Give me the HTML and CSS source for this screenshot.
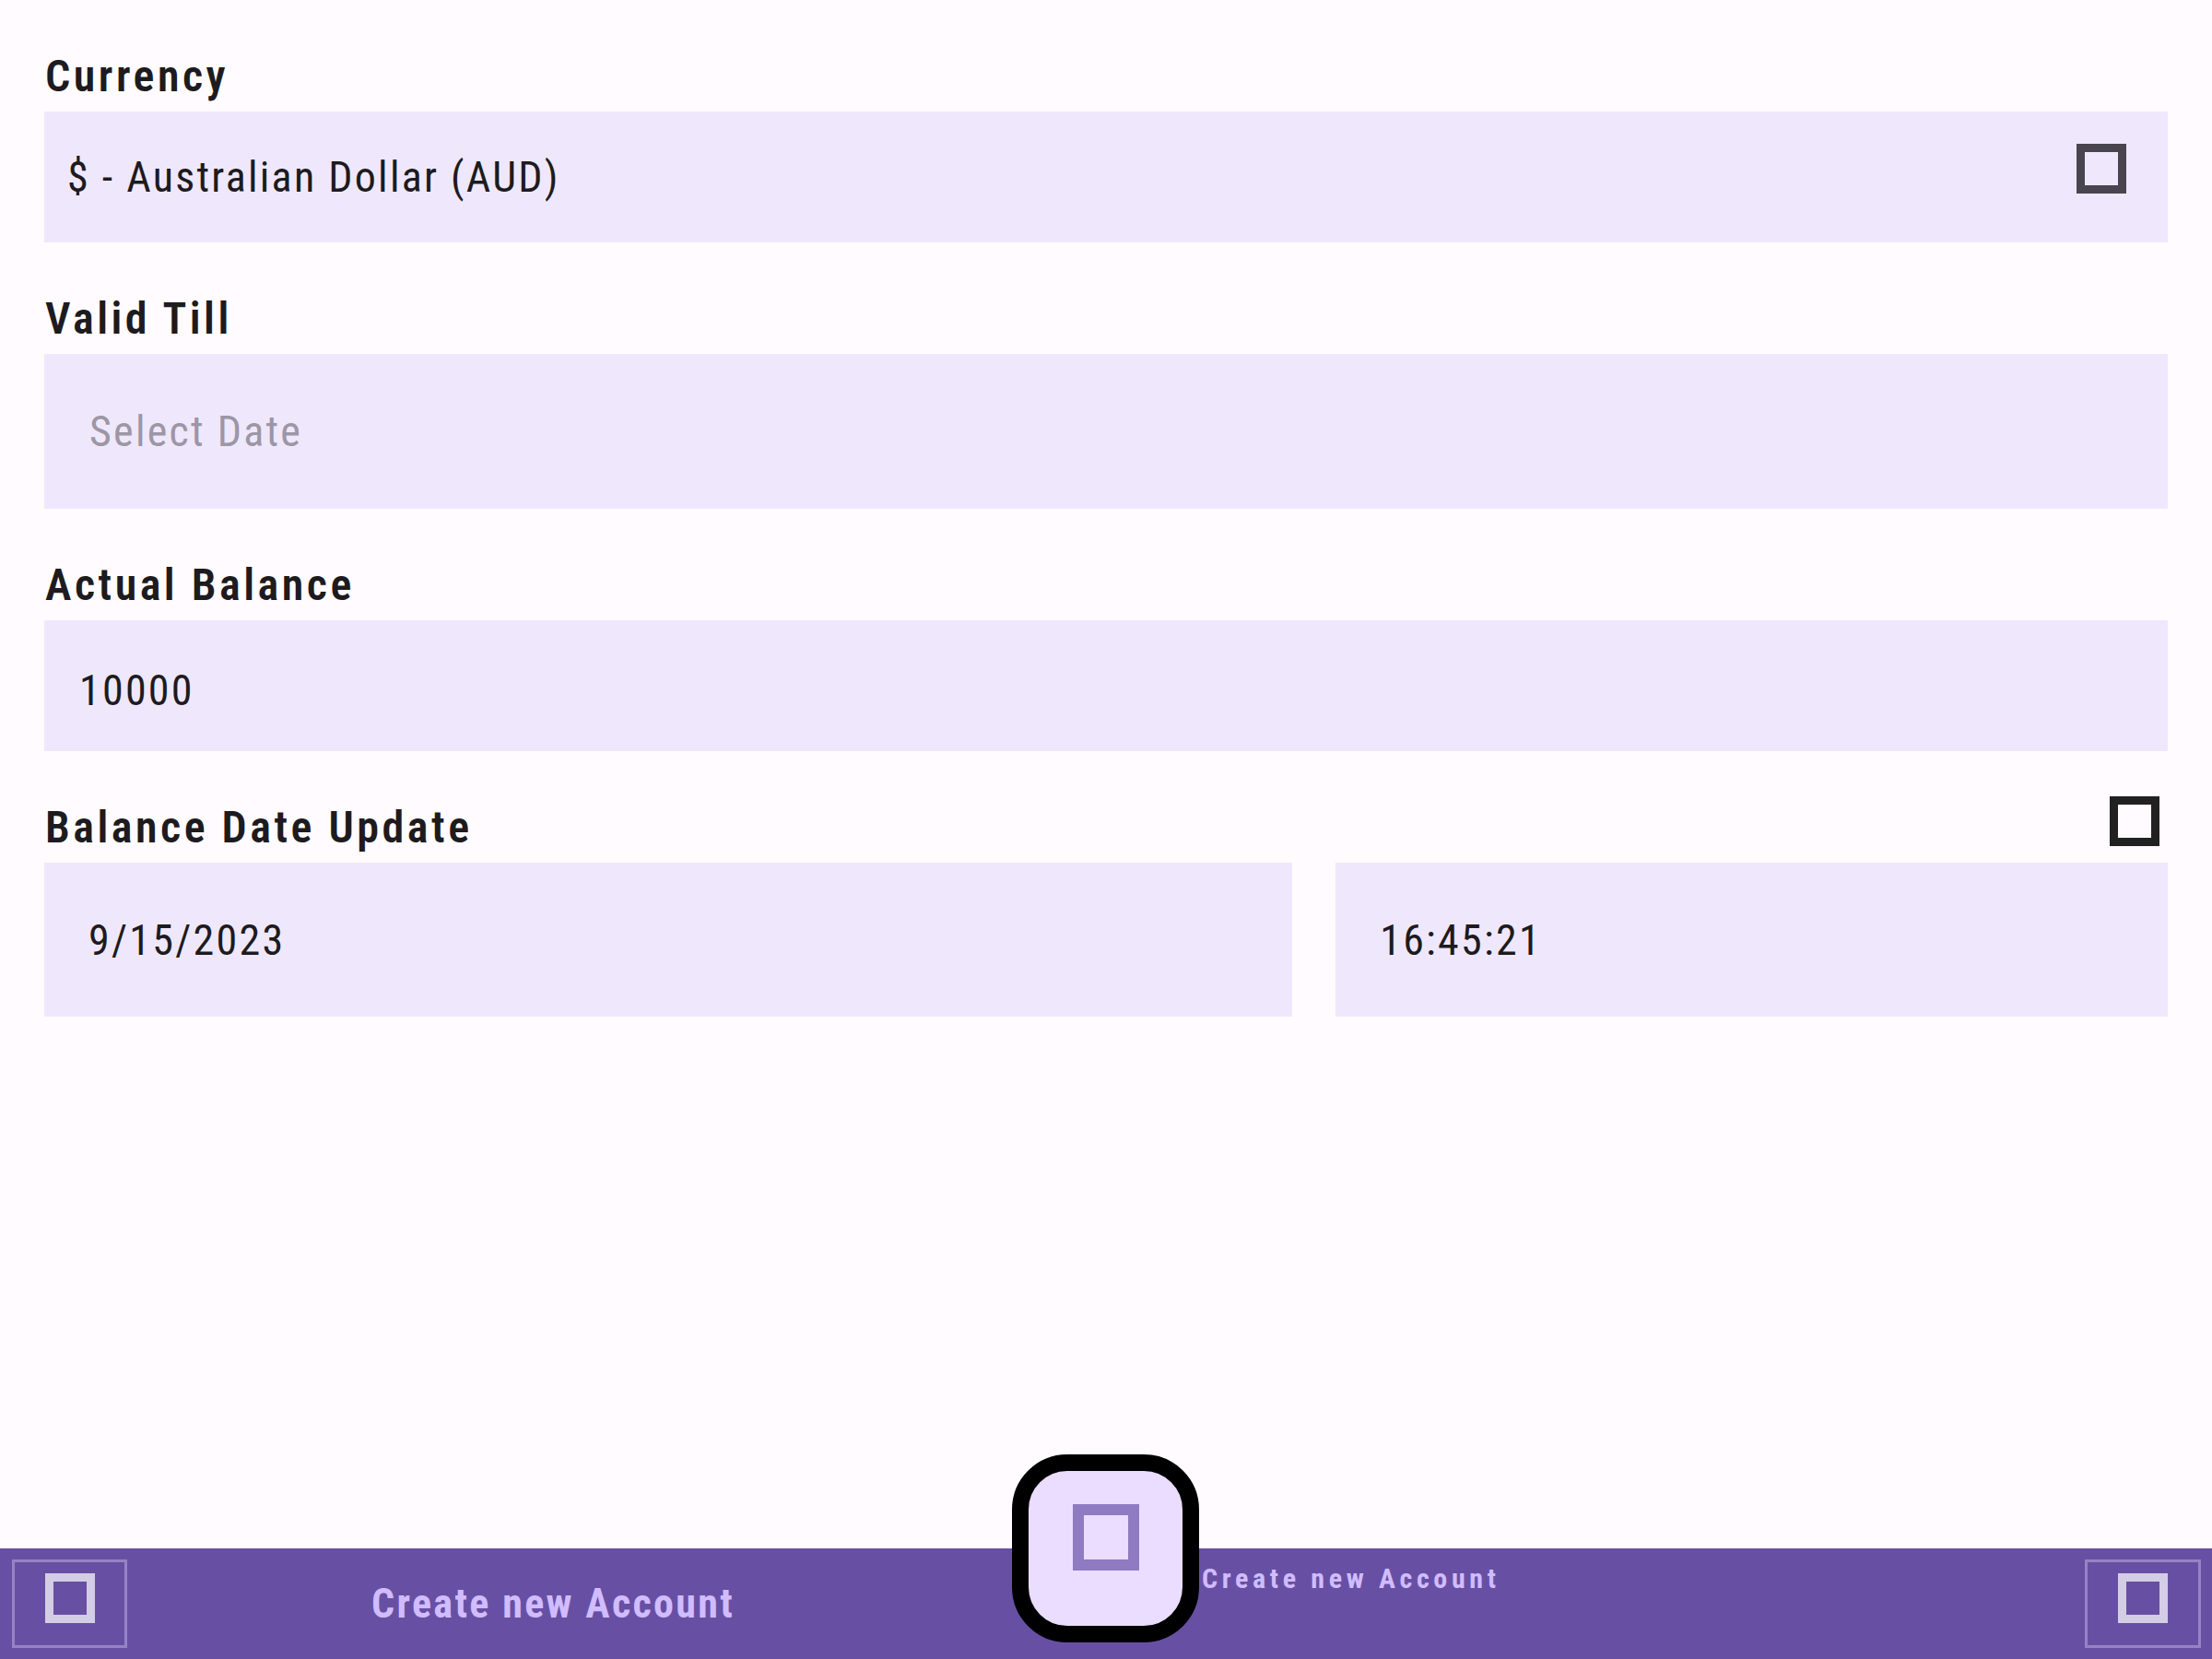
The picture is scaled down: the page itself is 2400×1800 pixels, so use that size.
FILE: index.html
```html
<!DOCTYPE html>
<html lang="en">
<head>
<meta charset="utf-8">
<title>Create new Account</title>
<link rel="stylesheet" href="styles.css">
</head>
<body>
<main class="form">
  <section class="group">
    <div class="label">Currency</div>
    <div class="field field-currency">
      <span class="value">$ - Australian Dollar (AUD)</span>
      <svg class="icon icon-currency" width="54" height="54" viewBox="0 0 54 54"><rect x="4.5" y="4.5" width="45" height="45" fill="none" stroke="currentColor" stroke-width="9"/></svg>
    </div>
  </section>
  <section class="group">
    <div class="label">Valid Till</div>
    <div class="field field-valid">
      <span class="value placeholder">Select Date</span>
    </div>
  </section>
  <section class="group">
    <div class="label">Actual Balance</div>
    <div class="field field-balance">
      <span class="value">10000</span>
    </div>
  </section>
  <section class="group">
    <div class="label-row">
      <div class="label">Balance Date Update</div>
      <svg class="icon icon-update" width="54" height="54" viewBox="0 0 54 54"><rect x="4.5" y="4.5" width="45" height="45" fill="none" stroke="currentColor" stroke-width="9"/></svg>
    </div>
    <div class="date-row">
      <div class="field field-date"><span class="value">9/15/2023</span></div>
      <div class="field field-date"><span class="value">16:45:21</span></div>
    </div>
  </section>
</main>
<nav class="bottom-bar">
  <div class="nav-btn">
    <svg class="nav-icon" width="54" height="54" viewBox="0 0 54 54"><rect x="4.5" y="4.5" width="45" height="45" fill="none" stroke="currentColor" stroke-width="9"/></svg>
  </div>
  <div class="bar-title">Create new Account</div>
  <div class="fab-wrap">
    <div class="fab">
      <svg class="fab-icon" width="72" height="72" viewBox="0 0 72 72"><rect x="6" y="6" width="60" height="60" fill="none" stroke="currentColor" stroke-width="12"/></svg>
    </div>
    <div class="fab-label">Create new Account</div>
  </div>
  <div class="nav-btn nav-btn-right">
    <svg class="nav-icon" width="54" height="54" viewBox="0 0 54 54"><rect x="4.5" y="4.5" width="45" height="45" fill="none" stroke="currentColor" stroke-width="9"/></svg>
  </div>
</nav>
</body>
</html>
```
FILE: styles.css
```css
html, body {
  margin: 0;
  padding: 0;
}
body {
  background: #fffbfe;
  font-family: Roboto, "Noto Sans", "Liberation Sans", sans-serif;
  font-stretch: 75%;
  color: #1d1b20;
  height: 1800px;
  display: flex;
  flex-direction: column;
  overflow: hidden;
}
.form {
  flex: 1;
  padding: 55px 48px 0;
  display: flex;
  flex-direction: column;
  gap: 55px;
}
.group {
  display: flex;
  flex-direction: column;
  gap: 10px;
}
.label {
  font-size: 48px;
  font-weight: 600;
  line-height: 56px;
  letter-spacing: 3.5px;
  color: #1d1b20;
  padding-left: 1px;
}
.label-row {
  display: flex;
  justify-content: space-between;
  align-items: flex-start;
}
.field {
  background: #efe8fc;
  display: flex;
  align-items: center;
  box-sizing: border-box;
}
.value {
  font-size: 46px;
  font-weight: 400;
  letter-spacing: 2.25px;
  color: #1d1b20;
}
.placeholder {
  color: #9d96a5;
}
.field-currency {
  height: 142px;
  padding-left: 25px;
}
.field-valid {
  height: 168px;
  padding-left: 49px;
}
.field-balance {
  height: 142px;
  padding-left: 38px;
  padding-top: 10px;
}
.date-row {
  display: grid;
  grid-template-columns: 3fr 2fr;
  gap: 47px;
}
.field-date {
  height: 167px;
  padding-left: 48px;
}
.icon {
  display: block;
  flex: none;
}
.icon-currency {
  color: #49454f;
  align-self: flex-start;
  margin-top: 35px;
  margin-left: auto;
  margin-right: 45px;
}
.icon-update {
  color: #212121;
  margin-top: -6px;
  margin-right: 9px;
}
.bottom-bar {
  position: relative;
  height: 120px;
  flex: none;
  background: #6750a4;
  display: flex;
  align-items: center;
  padding: 0 12px 0 13px;
}
.nav-btn {
  width: 125px;
  height: 96px;
  box-sizing: border-box;
  border: 3px solid #9584c4;
  display: flex;
  align-items: center;
  justify-content: center;
  flex: none;
}
.nav-btn-right {
  margin-left: auto;
  width: 126px;
}
.nav-icon {
  display: block;
  color: #d3cde6;
  margin-bottom: 12px;
}
.bar-title {
  margin-left: 265px;
  font-size: 44px;
  font-weight: 700;
  letter-spacing: 2.35px;
  color: #d0bcff;
}
.fab-wrap {
  position: absolute;
  left: 1098px;
  top: -102px;
  display: flex;
  align-items: flex-start;
}
.fab {
  width: 203px;
  height: 204px;
  box-sizing: border-box;
  border: 18px solid #000;
  border-radius: 60px;
  background: #eaddff;
  display: flex;
  align-items: center;
  justify-content: center;
}
.fab-icon {
  display: block;
  color: #8e7bc2;
  margin-bottom: 24px;
}
.fab-label {
  margin-top: 117px;
  margin-left: 3px;
  font-size: 30px;
  font-weight: 700;
  letter-spacing: 4.65px;
  color: #d0bcff;
  white-space: nowrap;
}
```
